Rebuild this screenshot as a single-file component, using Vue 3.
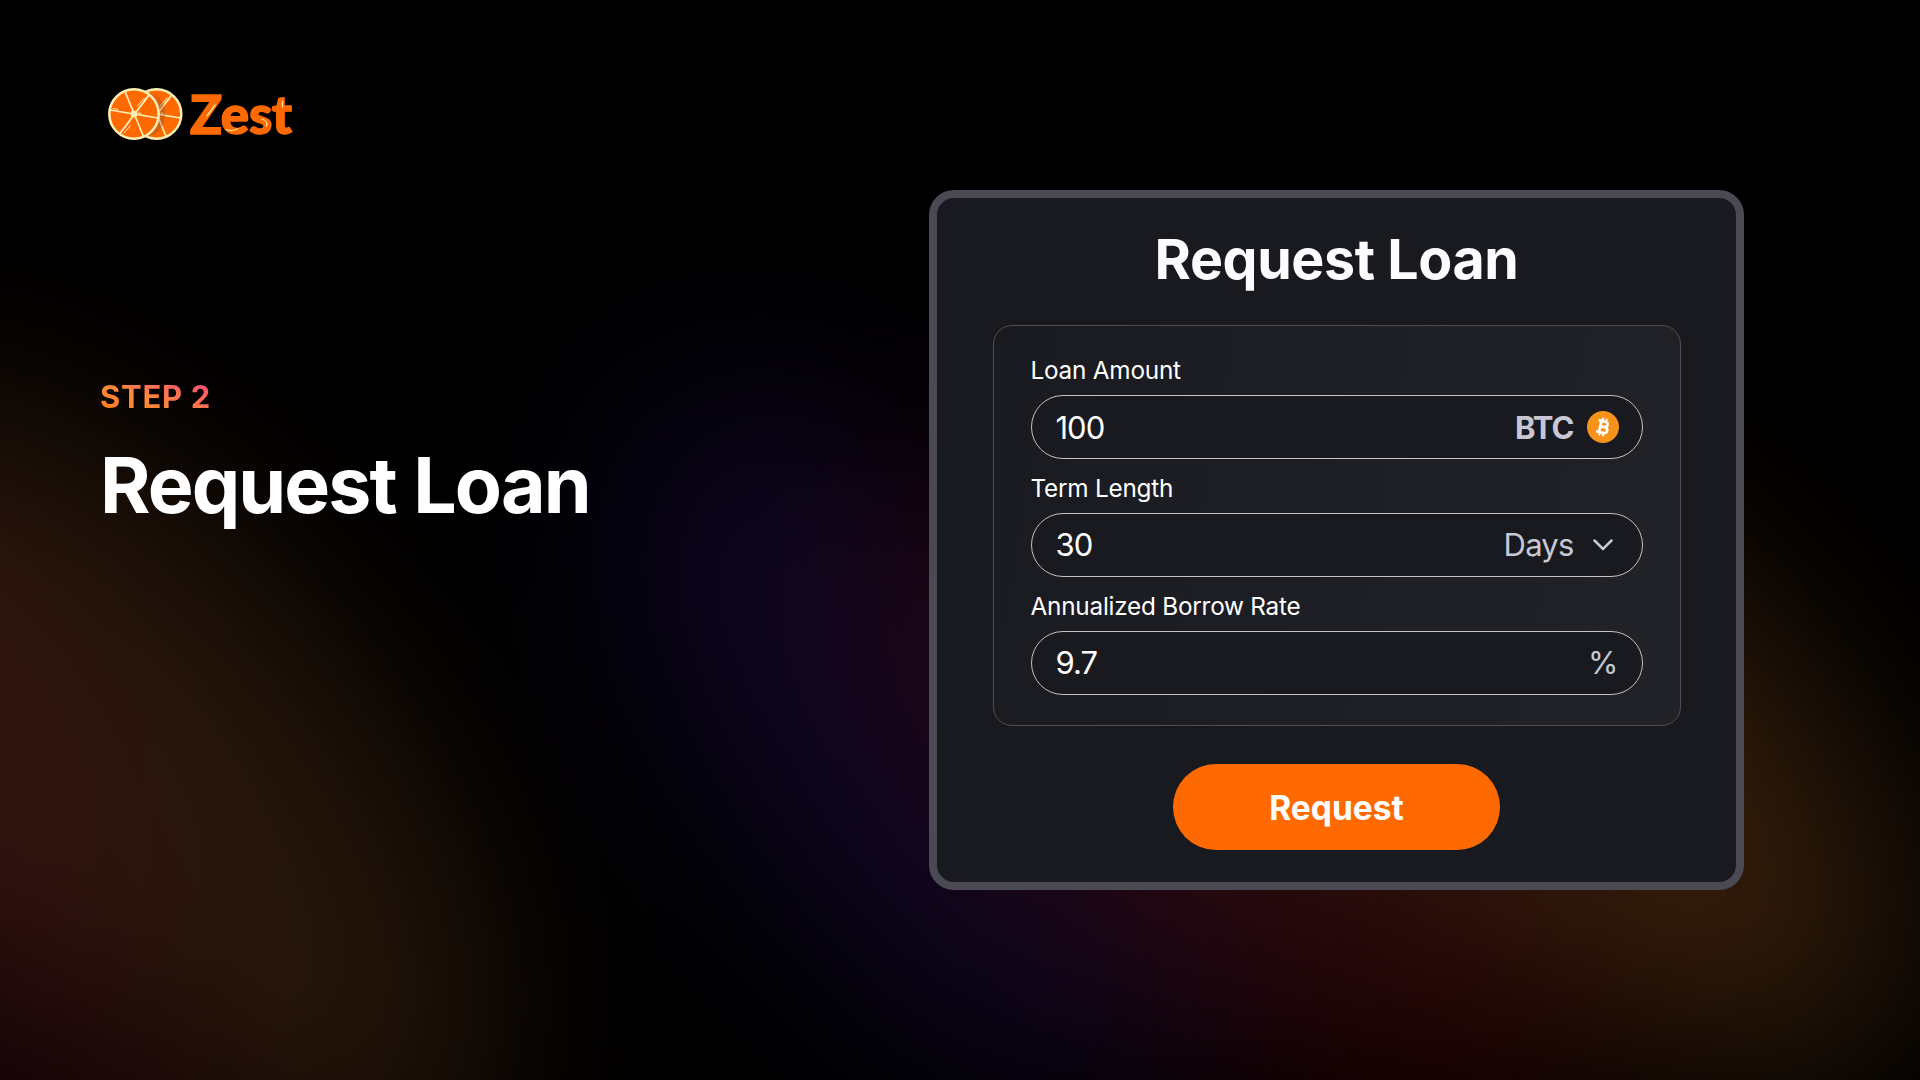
<template>
  <main class="slide">
    <svg class="glow" width="1920" height="1080" viewBox="0 0 1920 1080">
      <defs>
        <filter id="soft" x="-30%" y="-50%" width="160%" height="200%" color-interpolation-filters="sRGB">
          <feGaussianBlur stdDeviation="95" />
        </filter>
      </defs>
      <g filter="url(#soft)" opacity="0.25">
        <ellipse cx="130" cy="790" rx="480" ry="240" transform="rotate(50 130 790)" fill="#98582a" />
        <ellipse cx="-90" cy="730" rx="340" ry="150" transform="rotate(55 -90 730)" fill="#c84c40" />
        <ellipse cx="-20" cy="1150" rx="300" ry="150" transform="rotate(15 -20 1150)" fill="#480014" />
        <ellipse cx="910" cy="740" rx="410" ry="190" transform="rotate(54 910 740)" fill="#34188c" />
        <ellipse cx="1140" cy="790" rx="400" ry="160" transform="rotate(48 1140 790)" fill="#801448" />
        <ellipse cx="1430" cy="1060" rx="200" ry="110" fill="#600000" />
        <ellipse cx="1350" cy="790" rx="300" ry="160" transform="rotate(30 1350 790)" fill="#b43434" />
        <ellipse cx="1630" cy="770" rx="360" ry="190" transform="rotate(50 1630 770)" fill="#c8702c" />
      </g>
    </svg>

    <section class="intro">
      <div class="brand">
        <svg class="brand-mark" width="76" height="54" viewBox="0 0 76 54">
          <defs>
            <g id="slice">
              <circle r="24.7" fill="#ff6a00" stroke="#fff0b8" stroke-width="2.5" />
              <path d="M-9 -22.5 9.5 22.5M-24 -4 24 4M15 -19 -14.5 20" stroke="#fff0b8" stroke-width="1.7" />
              <circle r="3.4" fill="#fff0b8" />
              <path d="M3 -7.5 11 -16.5M5 -6.5 12.5 -14.5M-12 17 -4 7.5M-10 19 -3.5 11.5M-21 -5.5 -16 -4.6M4 -1 7 -0.7" stroke="#fff0b8" stroke-width="1" />
            </g>
          </defs>
          <use href="#slice" x="48.6" y="27" />
          <path d="M36 2.5A26 26 0 0 1 36 51.5A30 30 0 0 0 45 5A26 26 0 0 1 45 49" fill="#6b4a30" fill-opacity="0.3" />
          <use href="#slice" x="26" y="27" />
        </svg>
        <div class="brand-name">
          Zest
          <svg class="shine" width="104" height="54" viewBox="0 0 104 54">
            <path d="M17 27 25 16M36 40.5Q42 43 48 39.5M72 30Q78 32 76.5 37M92.5 12.5V18" fill="none" stroke="#ffe2a0" stroke-width="1.3" stroke-linecap="round" />
          </svg>
        </div>
      </div>
      <p class="step">STEP 2</p>
      <h1>Request Loan</h1>
    </section>

    <section class="card">
      <h2>Request Loan</h2>
      <div class="panel">
        <div v-for="field in fields" :key="field.label" class="field">
          <span class="field-label">{{ field.label }}</span>
          <div class="field-box">
            <span class="value">{{ field.value }}</span>
            <span class="unit" :class="field.type">{{ field.unit }}</span>
            <svg v-if="field.type === 'coin'" class="coin-icon" width="32" height="32" viewBox="0 0 32 32">
              <circle cx="16" cy="16" r="16" fill="#f7931a" />
              <g transform="rotate(13 16 16)" fill="none" stroke="#fff" stroke-width="2.7">
                <path d="M10.3 10.3H17.2A2.7 2.7 0 0 1 17.2 15.8H13M13 15.8H18A2.9 2.9 0 0 1 18 21.7H10.3M13.2 10.3V21.7" />
                <path d="M14.2 7V10.5M17.8 7V10.5M14.2 21.5V25M17.8 21.5V25" stroke-width="1.9" />
              </g>
            </svg>
            <svg v-if="field.type === 'select'" class="chevron" width="20" height="12" viewBox="0 0 20 12">
              <path d="M1.5 1.5 10 10 18.5 1.5" fill="none" stroke="#c8c8d4" stroke-width="2.5" stroke-linecap="round" />
            </svg>
          </div>
        </div>
      </div>
      <button type="button">Request</button>
    </section>
  </main>
</template>

<script setup>
const fields = [
  { label: 'Loan Amount', value: '100', unit: 'BTC', type: 'coin' },
  { label: 'Term Length', value: '30', unit: 'Days', type: 'select' },
  { label: 'Annualized Borrow Rate', value: '9.7', unit: '%', type: 'percent' },
]
</script>

<style>
body {
  background: #000;
}
</style>

<style scoped>
.slide {
  position: relative;
  box-sizing: border-box;
  display: flex;
  align-items: flex-start;
  width: 1920px;
  height: 1080px;
  overflow: hidden;
  font-family: Inter, "Liberation Sans", sans-serif;
  color: #fff;
  background: #000;
}

.glow {
  position: absolute;
  inset: 0;
}

.intro {
  position: relative;
  width: 829px;
  padding: 87px 0 0 100px;
}

.brand {
  display: flex;
  align-items: center;
  gap: 6px;
  height: 54px;
  padding-left: 8px;
}

.brand-name {
  position: relative;
  font-family: Lato, sans-serif;
  font-size: 53px;
  font-weight: 900;
  line-height: 50px;
  padding-bottom: 1px;
  letter-spacing: -0.3px;
  color: #ff6a00;
  -webkit-text-stroke: 1.4px #ff6a00;
}

.shine {
  position: absolute;
  top: 0;
  left: 0;
}

.step {
  width: 112px;
  margin: 236px 0 0;
  font-size: 31px;
  font-weight: 700;
  line-height: 40px;
  letter-spacing: 0.7px;
  white-space: nowrap;
  background: linear-gradient(20deg, #ff7a1a 10%, #ff8a3c 42%, #ff4d74 90%);
  background-clip: text;
  color: transparent;
}

h1 {
  margin: 17px 0 0;
  font-size: 77px;
  font-weight: 700;
  line-height: 102px;
  letter-spacing: -1.9px;
  word-spacing: 1px;
  white-space: nowrap;
}

.card {
  position: relative;
  box-sizing: border-box;
  display: flex;
  flex-direction: column;
  align-items: center;
  width: 815px;
  height: 700px;
  margin-top: 190px;
  border: 8px solid #4b4a54;
  border-radius: 25px;
  background: #191a1f;
}

h2 {
  margin: 27px 0 0;
  font-size: 55.5px;
  font-weight: 700;
  line-height: 68px;
  letter-spacing: -0.4px;
  color: #fcfcff;
}

.panel {
  box-sizing: border-box;
  display: flex;
  flex-direction: column;
  gap: 13.8px;
  width: 688px;
  height: 401px;
  margin-top: 32px;
  padding: 29px 37px 0;
  border: 1px solid #4e4e53;
  border-radius: 19px;
  background: linear-gradient(100deg, #1a1b20, #222328);
}

.field {
  display: flex;
  flex-direction: column;
  gap: 9px;
}

.field-label {
  font-size: 24.3px;
  line-height: 31px;
  letter-spacing: -0.22px;
}

.field-box {
  box-sizing: border-box;
  display: flex;
  align-items: center;
  height: 64px;
  padding: 0 24px;
  border: 1px solid #c2c2c7;
  border-radius: 32px;
  background: #191a1f;
  font-size: 31px;
}

.value {
  flex: 1;
  letter-spacing: -1px;
}

.unit {
  color: #c8c8d4;
}

.coin {
  font-weight: 700;
  letter-spacing: -1px;
}

.select {
  letter-spacing: -0.8px;
}

.percent {
  margin-right: -1px;
}

.coin-icon {
  margin: 0 -1px 0 13px;
}

.chevron {
  margin: 0 5px 0 19px;
}

button {
  width: 327px;
  height: 86px;
  margin-top: 38px;
  padding: 2px 0 0;
  border: none;
  border-radius: 43px;
  background: #ff6a00;
  color: #fff;
  font-family: inherit;
  font-size: 33.5px;
  font-weight: 700;
}
</style>
